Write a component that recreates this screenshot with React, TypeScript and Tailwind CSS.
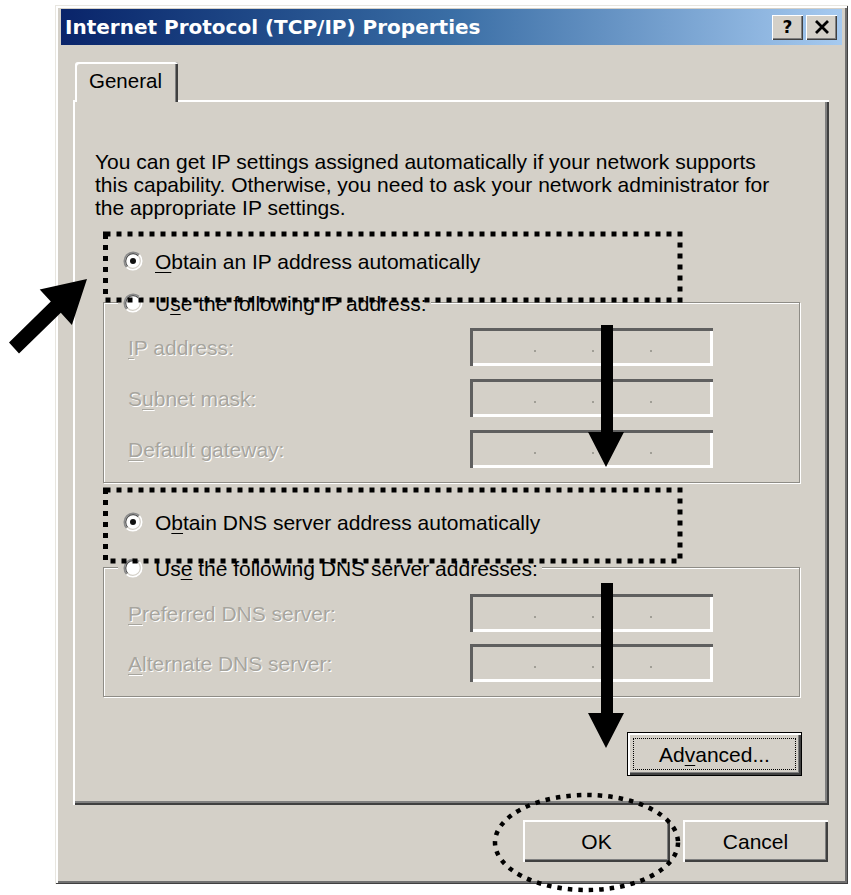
import React from "react";

function Radio({ checked }: { checked?: boolean }) {
  return (
    <svg width="22" height="22" viewBox="0 0 22 22" className="shrink-0">
      <circle cx="11" cy="11" r="9" fill="#ffffff" />
      <path d="M4.64 17.36 A9 9 0 0 1 17.36 4.64" fill="none" stroke="#8a8a8a" strokeWidth="1.5" />
      <path d="M17.36 4.64 A9 9 0 0 1 4.64 17.36" fill="none" stroke="#ffffff" strokeWidth="1.5" />
      <path d="M5.7 16.3 A7.5 7.5 0 0 1 16.3 5.7" fill="none" stroke="#505050" strokeWidth="1.2" />
      <path d="M16.3 5.7 A7.5 7.5 0 0 1 5.7 16.3" fill="none" stroke="#d4d0c8" strokeWidth="1.2" />
      {checked && <circle cx="11" cy="11" r="3" fill="#111111" />}
    </svg>
  );
}

function Mn({ text, i }: { text: string; i: number }) {
  return (
    <>
      {text.slice(0, i)}
      <span className="underline underline-offset-[3px] decoration-1">{text[i]}</span>
      {text.slice(i + 1)}
    </>
  );
}

function RadioRow({ checked, text, i }: { checked?: boolean; text: string; i: number }) {
  return (
    <div className="flex items-center h-[24px]">
      <Radio checked={checked} />
      <span className="ml-[11px] text-black whitespace-nowrap">
        <Mn text={text} i={i} />
      </span>
    </div>
  );
}

function IpBox() {
  return (
    <div className="w-[243px] h-[38px] bg-[#d4d0c8] shadow-[inset_3px_3px_0_#5f5f5f,inset_-3px_-3px_0_#ffffff] flex items-center pl-[64px] gap-[56px] pt-[8px]">
      <div className="w-[2px] h-[2px] bg-[#a09e96]" />
      <div className="w-[2px] h-[2px] bg-[#a09e96]" />
      <div className="w-[2px] h-[2px] bg-[#a09e96]" />
    </div>
  );
}

function FieldRow({ label, i }: { label: string; i: number }) {
  return (
    <div className="flex items-center h-[38px]">
      <div className="w-[342px] text-[#a7a59e] [text-shadow:1px_1px_0_#ffffff] whitespace-nowrap">
        <Mn text={label} i={i} />
      </div>
      <IpBox />
    </div>
  );
}

function Btn({ children, w }: { children: React.ReactNode; w: string }) {
  return (
    <div
      className={
        "h-[42px] bg-[#d4d0c8] flex items-center justify-center text-black shadow-[inset_2px_2px_0_#ffffff,inset_-2px_-2px_0_#404040,inset_-3px_-3px_0_#808080] " +
        w
      }
    >
      {children}
    </div>
  );
}

export default function App() {
  return (
    <div className="relative w-[851px] h-[895px] bg-white overflow-hidden pt-[5px] pl-[55px] font-['Liberation_Sans',Arial,sans-serif] text-[21px] leading-[23px]">
      {/* Window */}
      <div className="w-[793px] h-[879px] bg-[#d4d0c8] pt-[4px] px-[6px] shadow-[inset_1px_1px_0_#e8e6e0,inset_-1px_-1px_0_#404040,inset_3px_3px_0_#ffffff,inset_-3px_-3px_0_#707070]">
        {/* Title bar */}
        <div className="h-[36px] bg-linear-to-r from-[#0a246a] via-[#3a6ea5] to-[#a6caf0] flex items-center pl-[4px] pr-[5px]">
          <div className="font-['DejaVu_Sans',Verdana,sans-serif] font-bold text-[20px] text-white whitespace-nowrap leading-none">
            Internet Protocol (TCP/IP) Properties
          </div>
          <div className="ml-auto flex gap-[3px]">
            <div className="w-[31px] h-[25px] bg-[#d4d0c8] shadow-[inset_1px_1px_0_#ffffff,inset_-1px_-1px_0_#404040,inset_-2px_-2px_0_#808080] flex items-center justify-center font-['DejaVu_Sans',sans-serif] font-bold text-[17px] leading-none text-black">
              ?
            </div>
            <div className="w-[31px] h-[25px] bg-[#d4d0c8] shadow-[inset_1px_1px_0_#ffffff,inset_-1px_-1px_0_#404040,inset_-2px_-2px_0_#808080] flex items-center justify-center">
              <svg width="16" height="14" viewBox="0 0 16 14">
                <path d="M2 1 L14 13 M14 1 L2 13" stroke="#000" strokeWidth="2.8" />
              </svg>
            </div>
          </div>
        </div>

        {/* Tabs + panel */}
        <div className="mt-[17px] ml-[12px] mr-[13px]">
          <div className="flex">
            <div className="relative z-10 ml-[2px] w-[103px] h-[40px] -mb-[2px] bg-[#d4d0c8] rounded-t-[3px] shadow-[inset_2px_2px_0_#ffffff,inset_-2px_0_0_#404040,inset_-3px_0_0_#808080] pl-[14px] pt-[7px] text-black text-[20.5px]">
              General
            </div>
          </div>
          <div className="h-[705px] flex flex-col shadow-[inset_2px_2px_0_#ffffff,inset_-2px_-2px_0_#404040,inset_-4px_-4px_0_#808080]">
            <p className="mt-[50px] ml-[22px] text-black whitespace-nowrap">
              You can get IP settings assigned automatically if your network supports
              <br />
              this capability. Otherwise, you need to ask your network administrator for
              <br />
              the appropriate IP settings.
            </p>

            <div className="mt-[30px] ml-[49px]">
              <RadioRow checked text="Obtain an IP address automatically" i={0} />
            </div>

            <div className="mt-[29px] ml-[30px] w-[697px] flex flex-col border border-[#8e8c86] shadow-[inset_1px_1px_0_#ffffff,1px_1px_0_#ffffff] pb-[14px]">
              <div className="-mt-[12px] ml-[14px] self-start px-[4px] bg-[#d4d0c8]">
                <RadioRow text="Use the following IP address:" i={1} />
              </div>
              <div className="mt-[13px] pl-[24px] flex flex-col gap-[13px]">
                <FieldRow label="IP address:" i={0} />
                <FieldRow label="Subnet mask:" i={1} />
                <FieldRow label="Default gateway:" i={0} />
              </div>
            </div>

            <div className="mt-[27px] ml-[49px]">
              <RadioRow checked text="Obtain DNS server address automatically" i={1} />
            </div>

            <div className="mt-[33px] ml-[30px] w-[697px] flex flex-col border border-[#8e8c86] shadow-[inset_1px_1px_0_#ffffff,1px_1px_0_#ffffff] pb-[14px]">
              <div className="-mt-[12px] ml-[14px] self-start px-[4px] bg-[#d4d0c8]">
                <RadioRow text="Use the following DNS server addresses:" i={2} />
              </div>
              <div className="mt-[14px] pl-[24px] flex flex-col gap-[12px]">
                <FieldRow label="Preferred DNS server:" i={0} />
                <FieldRow label="Alternate DNS server:" i={0} />
              </div>
            </div>

            <div className="mt-[35px] self-end mr-[27px] w-[175px] h-[44px] border border-black bg-[#d4d0c8] shadow-[inset_2px_2px_0_#ffffff,inset_-2px_-2px_0_#404040,inset_-3px_-3px_0_#808080] p-[5px]">
              <div className="w-full h-full border border-dotted border-black flex items-center justify-center text-black">
                <Mn text="Advanced..." i={2} />
              </div>
            </div>
          </div>
        </div>

        {/* Bottom buttons */}
        <div className="mt-[15px] pr-[14px] flex justify-end gap-[13px]">
          <Btn w="w-[147px]">OK</Btn>
          <Btn w="w-[145px]">Cancel</Btn>
        </div>
      </div>

      {/* Annotation overlay */}
      <svg className="absolute inset-0 pointer-events-none" width="851" height="895" viewBox="0 0 851 895">
        <rect x="105.5" y="234" width="574.5" height="66" fill="none" stroke="#000" strokeWidth="5" strokeDasharray="5 6" />
        <rect x="105.5" y="490" width="574.5" height="71" fill="none" stroke="#000" strokeWidth="5" strokeDasharray="5 6" />
        <ellipse cx="586.5" cy="842.5" rx="91.5" ry="47.5" fill="none" stroke="#000" strokeWidth="4.5" strokeDasharray="4.5 6" />
        <polygon points="87,279 71.9,325 60.8,312.8 19,353.6 9,342.4 50.8,301.6 39.7,289.4" fill="#000" />
        <polygon points="601,325 613,325 613,432 624,432 606,467 588,432 601,432" fill="#000" />
        <polygon points="601,583 613,583 613,713 624,713 606,748 588,713 601,713" fill="#000" />
      </svg>
    </div>
  );
}
